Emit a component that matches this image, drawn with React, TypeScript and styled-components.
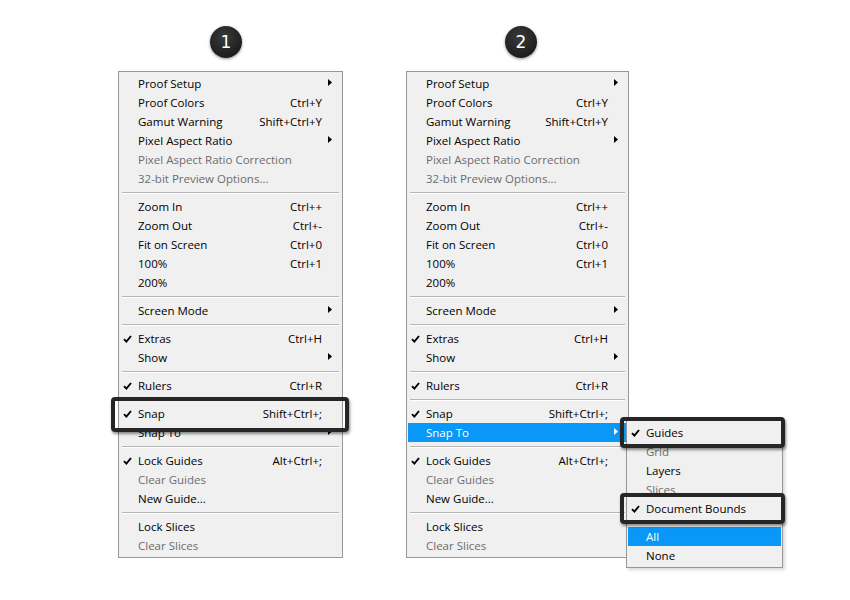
import React from "react";
import styled, { createGlobalStyle } from "styled-components";

type Item =
  | "sep"
  | {
      label: string;
      shortcut?: string;
      checked?: boolean;
      disabled?: boolean;
      arrow?: boolean;
      active?: boolean;
      callout?: boolean;
      flyout?: boolean;
    };

const baseItems = (second: boolean): Item[] => [
  { label: "Proof Setup", arrow: true },
  { label: "Proof Colors", shortcut: "Ctrl+Y" },
  { label: "Gamut Warning", shortcut: "Shift+Ctrl+Y" },
  { label: "Pixel Aspect Ratio", arrow: true },
  { label: "Pixel Aspect Ratio Correction", disabled: true },
  { label: "32-bit Preview Options...", disabled: true },
  "sep",
  { label: "Zoom In", shortcut: "Ctrl++" },
  { label: "Zoom Out", shortcut: "Ctrl+-" },
  { label: "Fit on Screen", shortcut: "Ctrl+0" },
  { label: "100%", shortcut: "Ctrl+1" },
  { label: "200%" },
  "sep",
  { label: "Screen Mode", arrow: true },
  "sep",
  { label: "Extras", shortcut: "Ctrl+H", checked: true },
  { label: "Show", arrow: true },
  "sep",
  { label: "Rulers", shortcut: "Ctrl+R", checked: true },
  "sep",
  { label: "Snap", shortcut: "Shift+Ctrl+;", checked: true, callout: !second },
  { label: "Snap To", arrow: true, active: second, flyout: second },
  "sep",
  { label: "Lock Guides", shortcut: "Alt+Ctrl+;", checked: true },
  { label: "Clear Guides", disabled: true },
  { label: "New Guide..." },
  "sep",
  { label: "Lock Slices" },
  { label: "Clear Slices", disabled: true },
];

const snapItems: Item[] = [
  { label: "Guides", checked: true, callout: true },
  { label: "Grid", disabled: true },
  { label: "Layers" },
  { label: "Slices", disabled: true },
  { label: "Document Bounds", checked: true, callout: true },
  "sep",
  { label: "All", active: true },
  { label: "None" },
];

const GlobalStyle = createGlobalStyle`
  body {
    margin: 0;
    background: #ffffff;
    font-family: "Open Sans", "Noto Sans", sans-serif;
  }
`;

const Page = styled.div`
  display: flex;
  gap: 63px;
  padding: 26px 0 0 118px;
  width: 850px;
  height: 600px;
  box-sizing: border-box;
`;

const Column = styled.div`
  display: flex;
  flex-direction: column;
  align-items: flex-start;
`;

const Badge = styled.div<{ $shift: number }>`
  width: 32px;
  height: 32px;
  margin-left: ${(p) => p.$shift}px;
  margin-bottom: 13px;
  border-radius: 50%;
  background: radial-gradient(circle at 45% 35%, #3a3a3a, #1e1e1e 70%);
  box-shadow: 0 1px 3px rgba(0, 0, 0, 0.45);
  color: #ffffff;
  font-family: "DejaVu Sans", sans-serif;
  font-size: 17px;
  display: flex;
  align-items: center;
  justify-content: center;
`;

const Menu = styled.div<{ $width: number }>`
  position: relative;
  width: ${(p) => p.$width}px;
  box-sizing: border-box;
  background: #f0f0f0;
  border: 1px solid #979797;
  padding: 2px 1px;
  font-size: 11.5px;
`;

const Flyout = styled(Menu)`
  position: absolute;
  left: 218px;
  top: -3px;
  z-index: 2;
  box-shadow: 2px 2px 3px rgba(0, 0, 0, 0.15);
`;

const Row = styled.div<{ $active?: boolean; $disabled?: boolean }>`
  position: relative;
  display: grid;
  grid-template-columns: 18px 1fr auto 19px;
  align-items: center;
  height: 19px;
  background: ${(p) => (p.$active ? "#0998f7" : "transparent")};
  color: ${(p) => (p.$active ? "#ffffff" : p.$disabled ? "#6d6d6d" : "#000000")};
  white-space: nowrap;
`;

const Label = styled.span`
  line-height: 19px;
`;

const Shortcut = styled.span`
  line-height: 19px;
`;

const Mark = styled.span`
  display: flex;
  align-items: center;
  padding-left: 3px;
`;

const ArrowCell = styled.span`
  display: flex;
  align-items: center;
  padding-left: 6px;
  margin-top: -3px;
`;

const Separator = styled.div`
  height: 1px;
  margin: 4px 2px;
  background: #b4b4b4;
  box-shadow: 0 1px 0 #ffffff;
`;

const Callout = styled.div<{ $l: number; $r: number; $t: number; $b: number }>`
  position: absolute;
  left: ${(p) => p.$l}px;
  right: ${(p) => p.$r}px;
  top: ${(p) => p.$t}px;
  bottom: ${(p) => p.$b}px;
  border: 4px solid #262626;
  border-radius: 4px;
  box-shadow: 1px 2px 3px rgba(0, 0, 0, 0.45);
  z-index: 3;
  pointer-events: none;
`;

const Check = () => (
  <svg width="9" height="8" viewBox="0 0 9 8">
    <path d="M1 4.2 L3.4 6.6 L8 1" fill="none" stroke="#000" strokeWidth="1.9" />
  </svg>
);

const Arrow = ({ color }: { color: string }) => (
  <svg width="4" height="7" viewBox="0 0 4 7">
    <polygon points="0,0 4,3.5 0,7" fill={color} />
  </svg>
);

const MenuList = ({
  items,
  calloutBox,
}: {
  items: Item[];
  calloutBox: { l: number; r: number; t: number; b: number };
}) => (
  <>
    {items.map((item, i) => {
      if (item === "sep") return <Separator key={i} />;
      return (
        <Row key={i} $active={item.active} $disabled={item.disabled}>
          <Mark>{item.checked ? <Check /> : null}</Mark>
          <Label>{item.label}</Label>
          <Shortcut>{item.shortcut}</Shortcut>
          <ArrowCell>
            {item.arrow ? <Arrow color={item.active ? "#ffffff" : "#000000"} /> : null}
          </ArrowCell>
          {item.callout ? (
            <Callout $l={calloutBox.l} $r={calloutBox.r} $t={calloutBox.t} $b={calloutBox.b} />
          ) : null}
          {item.flyout ? (
            <Flyout $width={157}>
              <MenuList items={snapItems} calloutBox={{ l: -8, r: -4, t: -6, b: -6 }} />
            </Flyout>
          ) : null}
        </Row>
      );
    })}
  </>
);

export default function App() {
  return (
    <>
      <GlobalStyle />
      <Page>
        <Column>
          <Badge $shift={92}>1</Badge>
          <Menu $width={225}>
            <MenuList items={baseItems(false)} calloutBox={{ l: -9, r: -8, t: -7, b: -9 }} />
          </Menu>
        </Column>
        <Column>
          <Badge $shift={99}>2</Badge>
          <Menu $width={223}>
            <MenuList items={baseItems(true)} calloutBox={{ l: -9, r: -8, t: -7, b: -9 }} />
          </Menu>
        </Column>
      </Page>
    </>
  );
}
